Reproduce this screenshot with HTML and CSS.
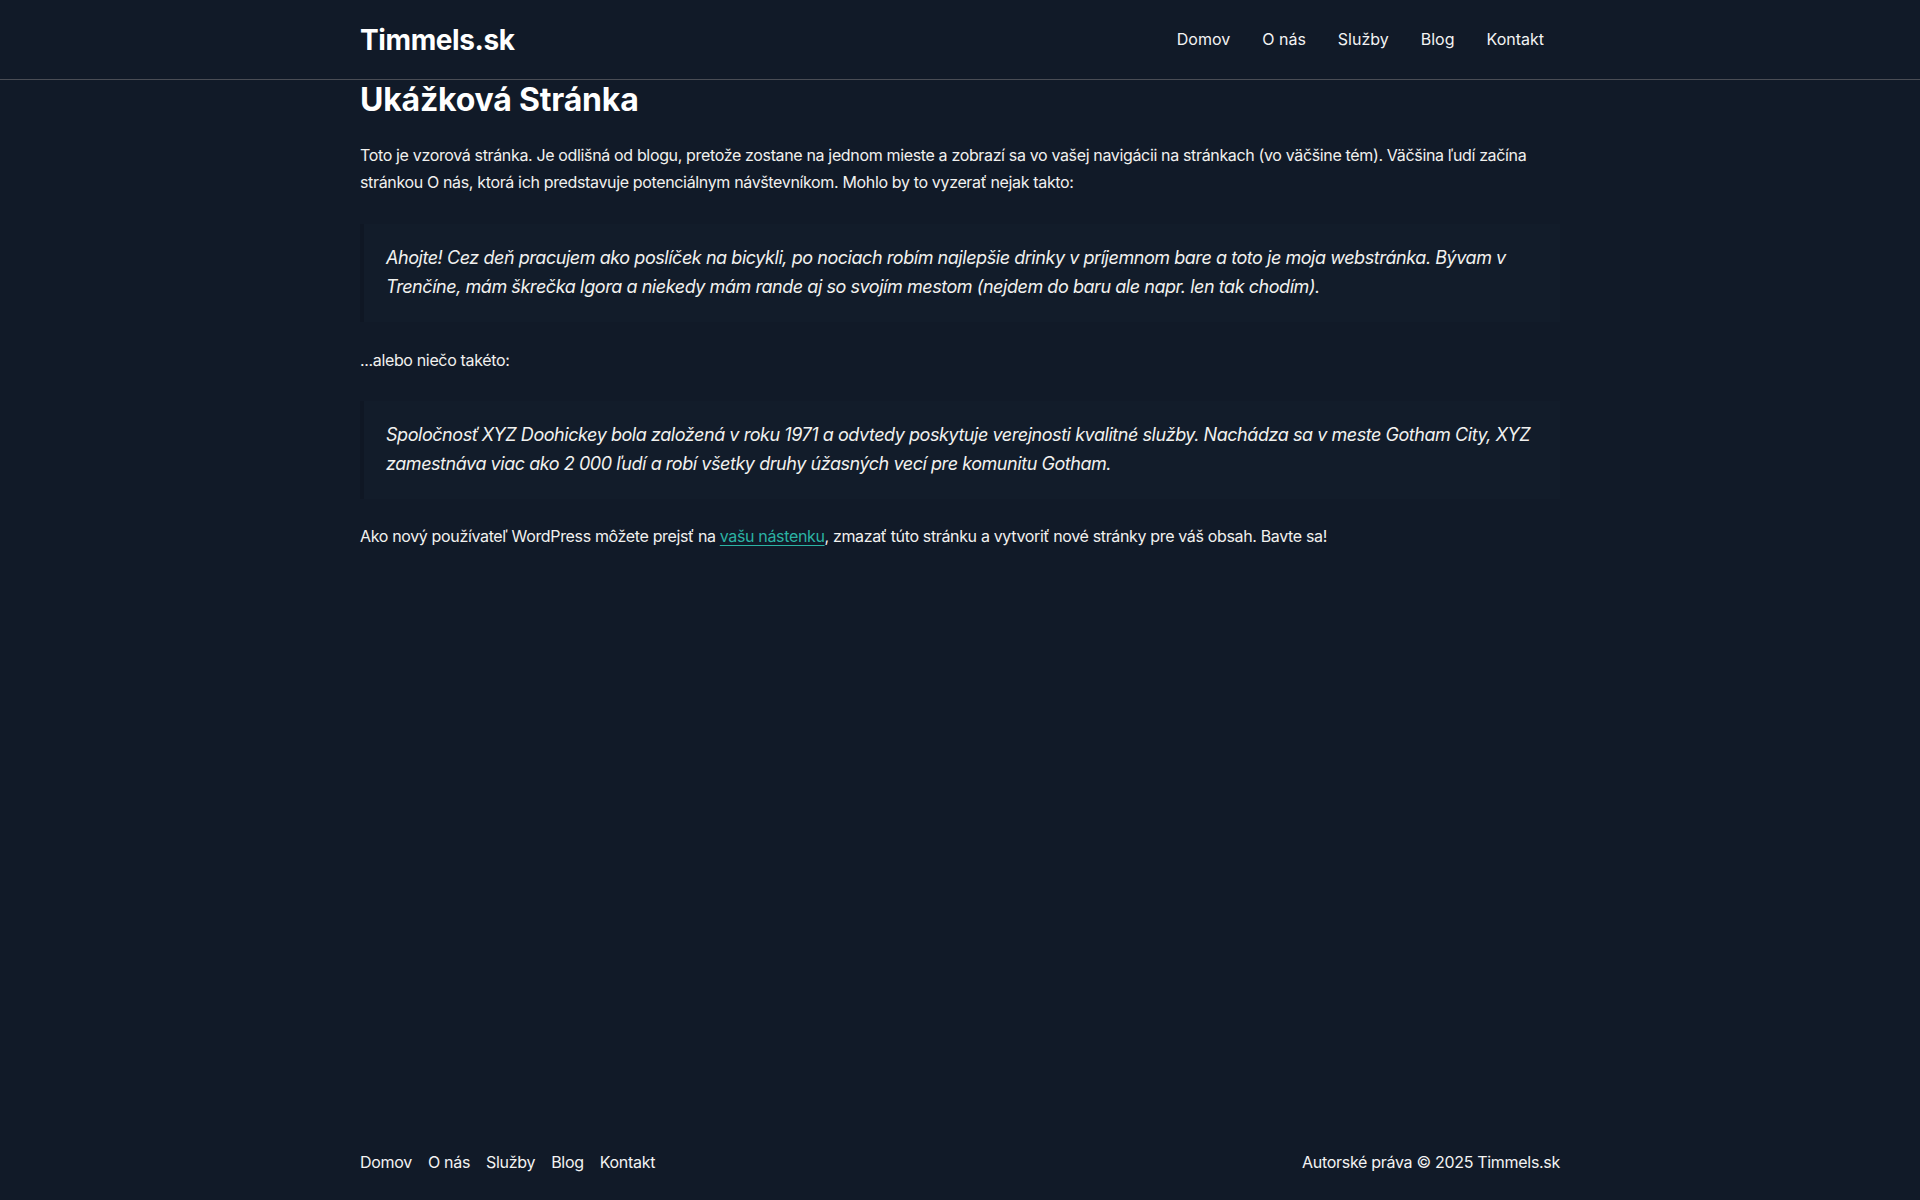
FILE: index.html
```html
<!DOCTYPE html>
<html lang="sk">
<head>
<meta charset="utf-8">
<title>Ukážková Stránka – Timmels.sk</title>
<link rel="stylesheet" href="styles.css">
</head>
<body>
<header class="site-header">
  <div class="container header-inner">
    <a class="logo" href="#">Timmels.sk</a>
    <nav class="main-nav">
      <a href="#">Domov</a>
      <a href="#">O nás</a>
      <a href="#">Služby</a>
      <a href="#">Blog</a>
      <a href="#">Kontakt</a>
    </nav>
  </div>
</header>
<main class="container content">
  <h1 class="page-title">Ukážková Stránka</h1>
  <p>Toto je vzorová stránka. Je odlišná od blogu, pretože zostane na jednom mieste a zobrazí sa vo vašej navigácii na stránkach (vo väčšine tém). Väčšina ľudí začína stránkou O nás, ktorá ich predstavuje potenciálnym návštevníkom. Mohlo by to vyzerať nejak takto:</p>
  <blockquote><p>Ahojte! Cez deň pracujem ako poslíček na bicykli, po nociach robím najlepšie drinky v príjemnom bare a toto je moja webstránka. Bývam v Trenčíne, mám škrečka Igora a niekedy mám rande aj so svojím mestom (nejdem do baru ale napr. len tak chodím).</p></blockquote>
  <p class="after-quote">...alebo niečo takéto:</p>
  <blockquote class="second"><p>Spoločnosť XYZ Doohickey bola založená v roku 1971 a odvtedy poskytuje verejnosti kvalitné služby. Nachádza sa v meste Gotham City, XYZ zamestnáva viac ako 2 000 ľudí a robí všetky druhy úžasných vecí pre komunitu Gotham.</p></blockquote>
  <p class="after-quote">Ako nový používateľ WordPress môžete prejsť na <a class="link" href="#">vašu nástenku</a>, zmazať túto stránku a vytvoriť nové stránky pre váš obsah. Bavte sa!</p>
</main>
<footer class="site-footer">
  <div class="container footer-inner">
    <nav class="footer-nav">
      <a href="#">Domov</a>
      <a href="#">O nás</a>
      <a href="#">Služby</a>
      <a href="#">Blog</a>
      <a href="#">Kontakt</a>
    </nav>
    <div class="copyright">Autorské práva © 2025 Timmels.sk</div>
  </div>
</footer>
</body>
</html>
```
FILE: styles.css
```css
* { box-sizing: border-box; }
html, body { margin: 0; padding: 0; }
body {
  background: #111a28;
  color: #f1f1ef;
  font-family: Inter, "DejaVu Sans", sans-serif;
  font-size: 16px;
  line-height: 1.7;
  min-height: 100vh;
  display: flex;
  flex-direction: column;
}
a { color: inherit; text-decoration: none; }
.container {
  width: 1200px;
  margin: 0 auto;
}
.site-header {
  border-bottom: 1px solid #4a4d55;
}
.header-inner {
  height: 79px;
  display: flex;
  align-items: center;
  justify-content: space-between;
}
.logo {
  font-size: 28px;
  font-weight: 700;
  letter-spacing: -0.4px;
  color: #ffffff;
  line-height: 1;
}
.main-nav { display: flex; }
.main-nav a {
  padding: 0 16px;
  font-size: 16px;
  color: #f3f3f3;
}
.content {
  flex: 1;
  padding-bottom: 40px;
}
.page-title {
  margin: 0;
  font-size: 32px;
  font-weight: 700;
  line-height: 40px;
  letter-spacing: -0.2px;
  color: #ffffff;
}
.content > p {
  margin: 22px 0 0;
  letter-spacing: -0.35px;
}
.content > p.after-quote { margin-top: 0; }
blockquote {
  margin: 28px 0 25px;
  padding: 19px 20px 21px 22px;
  background: #121c2a;
  border-left: 4px solid #0f1724;
}
blockquote.second {
  margin-top: 26px;
  margin-bottom: 24px;
}
blockquote p {
  margin: 0;
  font-style: italic;
  font-size: 18px;
  line-height: 29px;
  letter-spacing: -0.45px;
}
.link {
  color: #2bb3a4;
  text-decoration: underline;
  text-underline-offset: 3px;
}
.site-footer {
  padding: 24px 0;
}
.footer-inner {
  display: flex;
  justify-content: space-between;
  align-items: center;
}
.footer-nav { display: flex; gap: 16px; }
.footer-nav a, .copyright {
  font-size: 16px;
  color: #f3f3f3;
  letter-spacing: -0.3px;
}
```
